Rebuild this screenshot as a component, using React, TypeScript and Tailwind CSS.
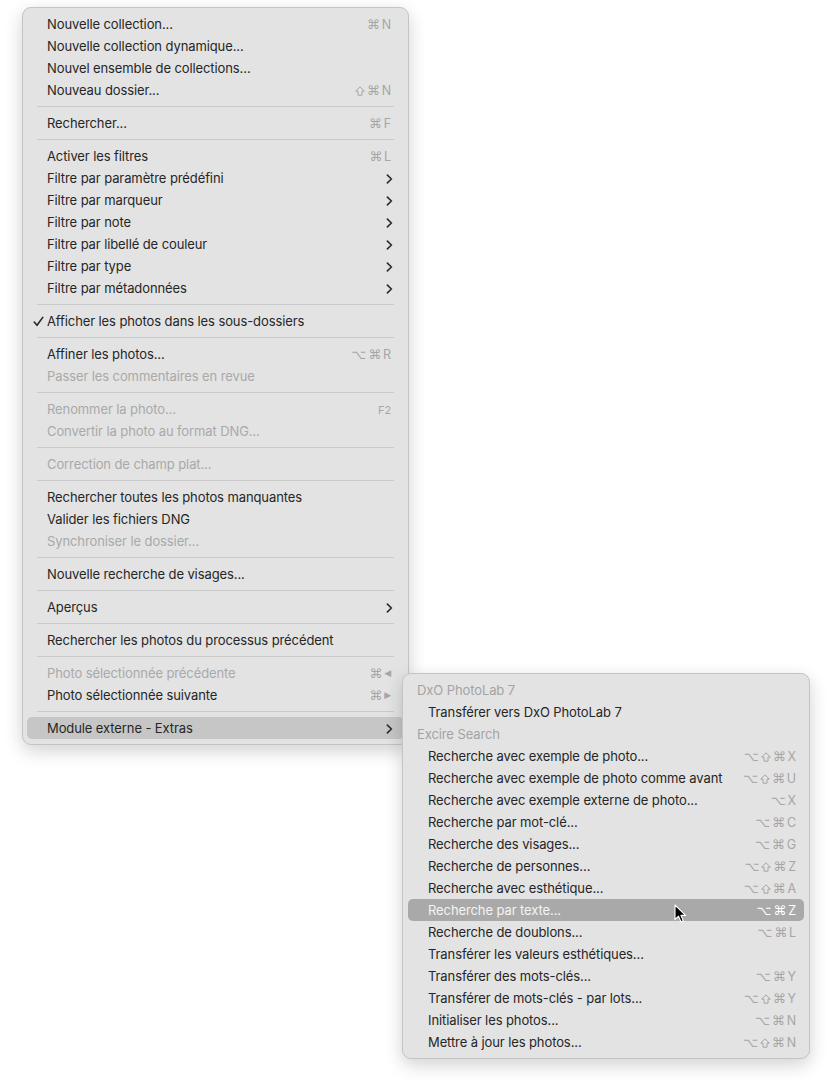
import React from "react";

type Row =
  | { kind: "sep" }
  | {
      kind: "item";
      label: string;
      keys?: string[];
      disabled?: boolean;
      sub?: boolean;
      checked?: boolean;
      active?: boolean;
    }
  | { kind: "header"; label: string };

const mainRows: Row[] = [
  { kind: "item", label: "Nouvelle collection...", keys: ["⌘", "N"] },
  { kind: "item", label: "Nouvelle collection dynamique..." },
  { kind: "item", label: "Nouvel ensemble de collections..." },
  { kind: "item", label: "Nouveau dossier...", keys: ["⇧", "⌘", "N"] },
  { kind: "sep" },
  { kind: "item", label: "Rechercher...", keys: ["⌘", "F"] },
  { kind: "sep" },
  { kind: "item", label: "Activer les filtres", keys: ["⌘", "L"] },
  { kind: "item", label: "Filtre par paramètre prédéfini", sub: true },
  { kind: "item", label: "Filtre par marqueur", sub: true },
  { kind: "item", label: "Filtre par note", sub: true },
  { kind: "item", label: "Filtre par libellé de couleur", sub: true },
  { kind: "item", label: "Filtre par type", sub: true },
  { kind: "item", label: "Filtre par métadonnées", sub: true },
  { kind: "sep" },
  { kind: "item", label: "Afficher les photos dans les sous-dossiers", checked: true },
  { kind: "sep" },
  { kind: "item", label: "Affiner les photos...", keys: ["⌥", "⌘", "R"] },
  { kind: "item", label: "Passer les commentaires en revue", disabled: true },
  { kind: "sep" },
  { kind: "item", label: "Renommer la photo...", keys: ["F2"], disabled: true },
  { kind: "item", label: "Convertir la photo au format DNG...", disabled: true },
  { kind: "sep" },
  { kind: "item", label: "Correction de champ plat...", disabled: true },
  { kind: "sep" },
  { kind: "item", label: "Rechercher toutes les photos manquantes" },
  { kind: "item", label: "Valider les fichiers DNG" },
  { kind: "item", label: "Synchroniser le dossier...", disabled: true },
  { kind: "sep" },
  { kind: "item", label: "Nouvelle recherche de visages..." },
  { kind: "sep" },
  { kind: "item", label: "Aperçus", sub: true },
  { kind: "sep" },
  { kind: "item", label: "Rechercher les photos du processus précédent" },
  { kind: "sep" },
  { kind: "item", label: "Photo sélectionnée précédente", keys: ["⌘", "◀"], disabled: true },
  { kind: "item", label: "Photo sélectionnée suivante", keys: ["⌘", "▶"] },
  { kind: "sep" },
  { kind: "item", label: "Module externe - Extras", sub: true, active: true },
];

const subRows: Row[] = [
  { kind: "header", label: "DxO PhotoLab 7" },
  { kind: "item", label: "Transférer vers DxO PhotoLab 7" },
  { kind: "header", label: "Excire Search" },
  { kind: "item", label: "Recherche avec exemple de photo...", keys: ["⌥", "⇧", "⌘", "X"] },
  { kind: "item", label: "Recherche avec exemple de photo comme avant", keys: ["⌥", "⇧", "⌘", "U"] },
  { kind: "item", label: "Recherche avec exemple externe de photo...", keys: ["⌥", "X"] },
  { kind: "item", label: "Recherche par mot-clé...", keys: ["⌥", "⌘", "C"] },
  { kind: "item", label: "Recherche des visages...", keys: ["⌥", "⌘", "G"] },
  { kind: "item", label: "Recherche de personnes...", keys: ["⌥", "⇧", "⌘", "Z"] },
  { kind: "item", label: "Recherche avec esthétique...", keys: ["⌥", "⇧", "⌘", "A"] },
  { kind: "item", label: "Recherche par texte...", keys: ["⌥", "⌘", "Z"], active: true },
  { kind: "item", label: "Recherche de doublons...", keys: ["⌥", "⌘", "L"] },
  { kind: "item", label: "Transférer les valeurs esthétiques..." },
  { kind: "item", label: "Transférer des mots-clés...", keys: ["⌥", "⌘", "Y"] },
  { kind: "item", label: "Transférer de mots-clés - par lots...", keys: ["⌥", "⇧", "⌘", "Y"] },
  { kind: "item", label: "Initialiser les photos...", keys: ["⌥", "⌘", "N"] },
  { kind: "item", label: "Mettre à jour les photos...", keys: ["⌥", "⇧", "⌘", "N"] },
];

const Chevron = () => (
  <svg width="7" height="10" viewBox="0 0 7 10" className="-mr-[2px] text-[#2e2e2e]">
    <path d="M1.4 1.2 L5.4 5 L1.4 8.8" fill="none" stroke="currentColor" strokeWidth="1.7" strokeLinecap="round" strokeLinejoin="round" />
  </svg>
);

const Check = () => (
  <svg width="11" height="11" viewBox="0 0 11 11" className="text-[#262626]">
    <path d="M1.2 6 L4 9.3 L9.8 1.4" fill="none" stroke="currentColor" strokeWidth="1.6" strokeLinecap="round" strokeLinejoin="round" />
  </svg>
);

const Shift = () => (
  <svg width="10" height="10" viewBox="0 0 10 10">
    <path d="M5 0.8 L9.3 5.2 L7 5.2 L7 9.2 L3 9.2 L3 5.2 L0.7 5.2 Z" fill="none" stroke="currentColor" strokeWidth="1" strokeLinejoin="round" />
  </svg>
);

const Keys = ({ keys, active }: { keys: string[]; active?: boolean }) => (
  <span
    className={`flex items-center gap-[2px] text-[13px] font-['DejaVu_Sans',sans-serif] ${
      active ? "text-white" : "text-[#a6a6a6]"
    }`}
  >
    {keys.map((k, i) =>
      k === "⇧" ? (
        <Shift key={i} />
      ) : k === "◀" || k === "▶" ? (
        <span key={i} className="text-[9px]">
          {k}
        </span>
      ) : k.length === 1 && k !== "⌘" && k !== "⌥" ? (
        <span key={i} className="font-['Inter',sans-serif] text-[12.5px]">
          {k}
        </span>
      ) : k === "F2" ? (
        <span key={i} className="font-['Inter',sans-serif] text-[11px]">
          {k}
        </span>
      ) : (
        <span key={i}>{k}</span>
      )
    )}
  </span>
);

const MenuRows = ({ rows, keyPad }: { rows: Row[]; keyPad: string }) => (
  <>
    {rows.map((r, i) => {
      if (r.kind === "sep") {
        return (
          <div key={i} className="flex h-[11px] items-center px-[10px]">
            <div className="h-px w-full bg-[#cacaca]" />
          </div>
        );
      }
      if (r.kind === "header") {
        return (
          <div key={i} className="flex h-[22px] items-center pl-[9px] pt-[1px] text-[#a3a3a3]">
            {r.label}
          </div>
        );
      }
      const strong = r.active && r.keys;
      return (
        <div
          key={i}
          className={`relative flex h-[22px] items-center justify-between rounded-[5px] pl-[20px] pt-[2px] ${keyPad} ${
            strong ? "bg-[#a9a9a9] text-[#f4f4f4]" : r.active ? "bg-[#c6c6c6]" : ""
          } ${r.disabled ? "text-[#a9a9a9]" : strong ? "" : "text-[#262626]"}`}
        >
          {r.checked && (
            <span className="absolute left-[6px] top-[6px]">
              <Check />
            </span>
          )}
          <span>{r.label}</span>
          {r.keys && <Keys keys={r.keys} active={r.active} />}
          {r.sub && <Chevron />}
        </div>
      );
    })}
  </>
);

export default function App() {
  return (
    <div className="relative h-[1085px] w-[832px] bg-white pl-[22px] pt-[7px] font-['Inter',sans-serif] text-[13px] tracking-[-0.1px]">
      <div className="flex w-[387px] flex-col rounded-[9px] border border-[#c4c4c4] bg-[#e3e3e3] px-[4px] py-[5px] shadow-[0_6px_18px_rgba(0,0,0,0.18)]">
        <MenuRows rows={mainRows} keyPad="pr-[13px]" />
      </div>

      <div className="absolute left-[402px] top-[673px] flex w-[408px] flex-col rounded-[9px] border border-[#c4c4c4] bg-[#e3e3e3] px-[5px] py-[5px] shadow-[0_6px_18px_rgba(0,0,0,0.18)]">
        <MenuRows rows={subRows} keyPad="pr-[8px]" />
      </div>

      <svg className="absolute left-[674px] top-[904px]" width="13" height="19" viewBox="0 0 13 19">
        <path d="M1 1 L1 15.5 L4.5 12.2 L7 17.8 L9.3 16.8 L6.9 11.4 L11.6 11.4 Z" fill="#000" stroke="#fff" strokeWidth="1.1" strokeLinejoin="round" />
      </svg>
    </div>
  );
}
